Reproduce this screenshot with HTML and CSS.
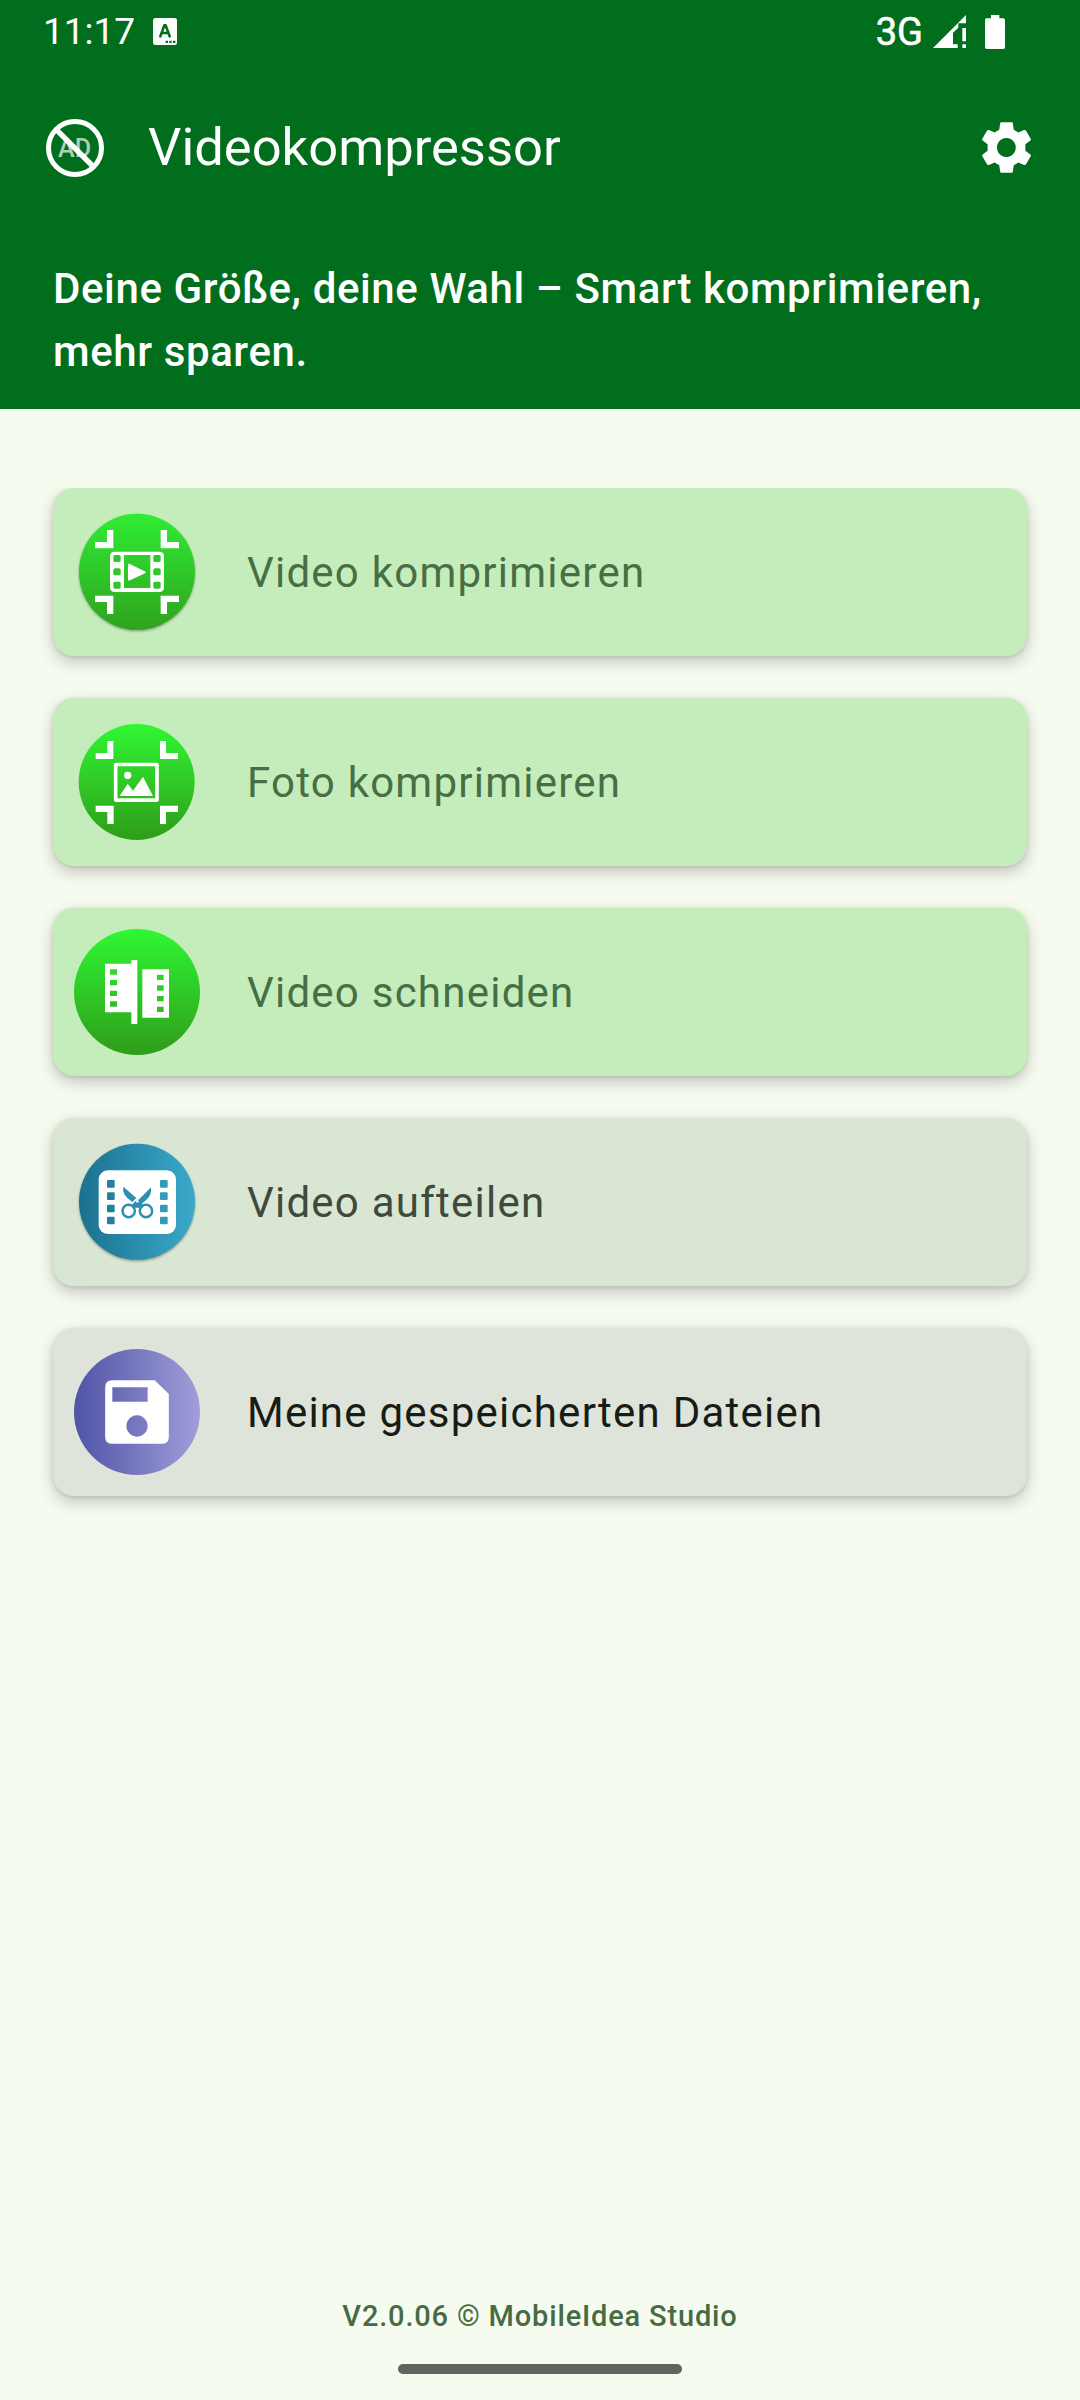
FILE: index.html
```html
<!DOCTYPE html>
<html lang="de">
<head>
<meta charset="utf-8">
<title>Videokompressor</title>
<link rel="stylesheet" href="styles.css">
</head>
<body>
<header class="header">
  <div class="status">
    <span class="clock">11:17</span>
    <svg class="notif" viewBox="0 0 72 81"><rect width="72" height="81" rx="7" fill="#fff"/><path d="M22 55 34 22h4L50 55M27 45h18" fill="none" stroke="#006e1c" stroke-width="8" stroke-linejoin="round" stroke-linecap="round"/><path d="M38 68h7v7h-7zM49 68h7v7h-7zM60 68h7v7h-7z" fill="#006e1c"/></svg>
    <span class="network">3G</span>
    <svg class="signal" viewBox="279 42 99 99" fill="#fff"><path d="M378 42V67H355V80L339 95V130H353V141H279zM367 81H378V121H367zM367 130H378V141H367z"/></svg>
    <svg class="battery" viewBox="435 42 60 102" fill="#fff"><path d="M453 42h25v10h12q5 0 5 5v82q0 5-5 5h-50q-5 0-5-5V57q0-5 5-5h13z"/></svg>
  </div>
  <div class="toolbar">
    <svg class="no-ads" viewBox="138 357 174 174"><text class="ad" x="174" y="472" textLength="99" lengthAdjust="spacingAndGlyphs">AD</text><circle cx="225" cy="444" r="79.5" fill="none" stroke="#fff" stroke-width="15"/><path d="M169 389 281 501" stroke="#fff" stroke-width="16"/></svg>
    <h1 class="title">Videokompressor</h1>
    <svg class="settings" viewBox="426 366 148 153"><path fill="#fff" fill-rule="evenodd" d="M484 366h32q3 0 3 3l3 20 14 8 17-7q4-1 6 2l14 24q2 3-1 5l-15 12v19l15 12q3 2 1 5l-14 24q-2 3-6 2l-17-7-14 8-3 20q0 3-3 3h-32q-3 0-3-3l-3-20-14-8-17 7q-4 1-6-2l-14-24q-2-3 1-5l15-12v-19l-15-12q-3-2-1-5l14-24q2-3 6-2l17 7 14-8 3-20q0-3 3-3zM499.500 414a28.500 28.500 0 1 0 .1 0z"/></svg>
  </div>
  <p class="tagline">Deine Größe, deine Wahl – Smart komprimieren, mehr sparen.</p>
</header>
<main class="menu">
  <div class="card">
    <svg class="icon" viewBox="102 117 378 378">
      <defs>
        <linearGradient id="green" x2="0" y2="1"><stop stop-color="#30f733"/><stop offset="1" stop-color="#2f9c19"/></linearGradient>
        <linearGradient id="green-soft" x2="0" y2="1"><stop stop-color="#30ec33"/><stop offset="1" stop-color="#2fa31e"/></linearGradient>
        <linearGradient id="blue"><stop stop-color="#1b718f"/><stop offset="1" stop-color="#3ba9ca"/></linearGradient>
        <linearGradient id="violet"><stop stop-color="#5054a6"/><stop offset=".45" stop-color="#7474bd"/><stop offset="1" stop-color="#a09fdb"/></linearGradient>
      </defs>
      <circle class="raised" cx="291" cy="305.500" r="174" fill="url(#green-soft)"/>
      <path fill="#fff" d="M201 180h19v55h-55v-19h36zM362 180h19v36h36v19h-55zM165 377h55v55h-19v-36h-36zM362 377h55v19h-36v36h-19z"/>
      <path fill="#fff" fill-rule="evenodd" d="M224 245h134q14 0 14 14v93q0 14-14 14H224q-14 0-14-14v-93q0-14 14-14zM252 255v99h79v-99z"/>
      <path fill="#fff" stroke="#fff" stroke-width="6" stroke-linejoin="round" d="M267 284v45l47-22z"/>
      <g fill="#30c529"><rect x="220" y="255" width="22" height="21" rx="5"/><rect x="220" y="295" width="22" height="21" rx="5"/><rect x="220" y="335" width="22" height="21" rx="5"/><rect x="340" y="255" width="22" height="21" rx="5"/><rect x="340" y="295" width="22" height="21" rx="5"/><rect x="340" y="335" width="22" height="21" rx="5"/></g>
    </svg>
    <span class="label">Video komprimieren</span>
  </div>
  <div class="card">
    <svg class="icon" viewBox="102 117 378 378">
      <circle cx="290" cy="306" r="174" fill="url(#green)"/>
      <path fill="#fff" d="M202 183h18v54h-53v-18h35zM360 183h18v36h36v18h-54zM167 377h54v55h-19v-36h-35zM360 377h54v19h-36v36h-18z"/>
      <rect x="227" y="253.500" width="124" height="107" rx="2" fill="none" stroke="#fff" stroke-width="11"/>
      <circle cx="263" cy="286" r="11" fill="#fff"/>
      <path fill="#fff" d="m239 348 24-37 16 21 30-42 30 58z"/>
    </svg>
    <span class="label">Foto komprimieren</span>
  </div>
  <div class="card">
    <svg class="icon" viewBox="102 117 378 378">
      <circle cx="291" cy="306" r="189" fill="url(#green)"/>
      <path fill="#fff" fill-rule="evenodd" d="M195 221h79v-11h18v192h-18v-35h-79zM210 238v16h21v-16zM210 270v16h21v-16zM210 302v16h21v-16zM210 334v16h21v-16zM307 238h80v145h-80zM351 254v16h20v-16zM351 286v16h20v-16zM351 318v16h20v-16zM351 350v16h20v-16z"/>
    </svg>
    <span class="label">Video schneiden</span>
  </div>
  <div class="card card-sage">
    <svg class="icon" viewBox="102 117 378 378">
      <circle class="raised" cx="291" cy="305.500" r="174" fill="url(#blue)"/>
      <rect x="176" y="211" width="232" height="191" rx="27" fill="#fff"/>
      <g fill="#2381a0"><rect x="201" y="240" width="23" height="23" rx="3"/><rect x="201" y="277" width="23" height="23" rx="3"/><rect x="201" y="314" width="23" height="23" rx="3"/><rect x="201" y="350" width="23" height="23" rx="3"/></g>
      <g fill="#329bbb"><rect x="360" y="240" width="23" height="23" rx="3"/><rect x="360" y="277" width="23" height="23" rx="3"/><rect x="360" y="314" width="23" height="23" rx="3"/><rect x="360" y="350" width="23" height="23" rx="3"/></g>
      <path fill="#2b8fb0" d="M250 260 289 294 277 306Q244 284 250 260zM333 262Q335 286 321 298L304 313H308V323H277V313L291 299H296zM277 312l9-5v9z"/>
      <circle cx="266" cy="333" r="18.500" fill="none" stroke="#2b8fb0" stroke-width="7.500"/>
      <circle cx="318" cy="333" r="18.500" fill="none" stroke="#2b8fb0" stroke-width="7.500"/>
      <circle cx="292" cy="304" r="4" fill="#fff"/>
    </svg>
    <span class="label">Video aufteilen</span>
  </div>
  <div class="card card-gray">
    <svg class="icon" viewBox="102 117 378 378">
      <circle cx="291" cy="306" r="189" fill="url(#violet)"/>
      <path fill="#fff" fill-rule="evenodd" d="M217 210.500H344L386.500 252V380q0 21.500-21.500 21.500H217q-21.500 0-21.500-21.500V232q0-21.500 21.500-21.500zM217 232v43h106v-43zM291 316a32 32 0 1 0 .1 0z"/>
    </svg>
    <span class="label">Meine gespeicherten Dateien</span>
  </div>
</main>
<footer class="footer">
  <span class="version">V2.0.06 © MobileIdea Studio</span>
  <div class="home-bar"></div>
</footer>
</body>
</html>
```
FILE: styles.css
```css
* { box-sizing: border-box; }
body {
  margin: 0;
  height: 2400px;
  display: flex;
  flex-direction: column;
  background: #f6fbf0;
  font-family: Roboto, sans-serif;
}
svg { display: block; flex: none; }
.header { height: 409px; background: #006e1c; color: #fff; }
.status { height: 63px; padding: 0 75px 0 43px; display: flex; align-items: center; }
.clock { font-size: 37px; line-height: 40px; letter-spacing: 0; }
.notif { width: 24px; height: 27px; margin-left: 18px; }
.network { margin-left: auto; font-size: 38px; line-height: 40px; -webkit-text-stroke: .6px #fff; }
.signal { width: 33px; height: 33px; margin-left: 10px; }
.battery { width: 20px; height: 34px; margin-left: 19px; }
.toolbar { height: 170px; padding: 0 49px 0 46px; display: flex; align-items: center; }
.no-ads { width: 58px; height: 58px; }
.ad { font-size: 80px; font-weight: 500; fill: #aed1b5; }
.title { margin: 0 0 2px 44px; font-size: 52.5px; font-weight: 400; line-height: 70px; }
.settings { width: 49px; height: 51px; margin: 0 0 2px auto; }
.tagline { margin: 24px 53px 0; font-size: 42px; font-weight: 500; line-height: 63px; letter-spacing: .6px; }
/* Clipped at the first card, like the top edge of a scroll area */
.menu { flex: 1; padding: 79px 53px 0; display: flex; flex-direction: column; gap: 42px; clip-path: inset(79px 0 0 0); }
.card {
  height: 168px;
  padding: 0 21px;
  display: flex;
  align-items: center;
  border-radius: 21px;
  background: #c4edbb;
  color: #476f45;
  box-shadow: 0 6px 16px rgba(0, 0, 0, .22), 0 1px 4px rgba(0, 0, 0, .1);
}
.card-sage { background: #d9e6d3; color: #404a3c; }
.card-gray { background: #dee4d9; color: #171d16; }
.icon { width: 126px; height: 126px; }
.raised { filter: drop-shadow(0 4px 3px rgba(0, 0, 0, .35)); }
.label { margin-left: 47px; font-size: 42px; line-height: 63px; letter-spacing: 1.24px; }
.footer { height: 114px; display: flex; flex-direction: column; align-items: center; }
.version { margin-top: 9px; font-size: 29px; font-weight: 500; line-height: 42px; letter-spacing: .83px; color: #476c44; }
.home-bar { width: 284px; height: 10px; margin-top: 27px; border-radius: 5px; background: #62655f; }
```
